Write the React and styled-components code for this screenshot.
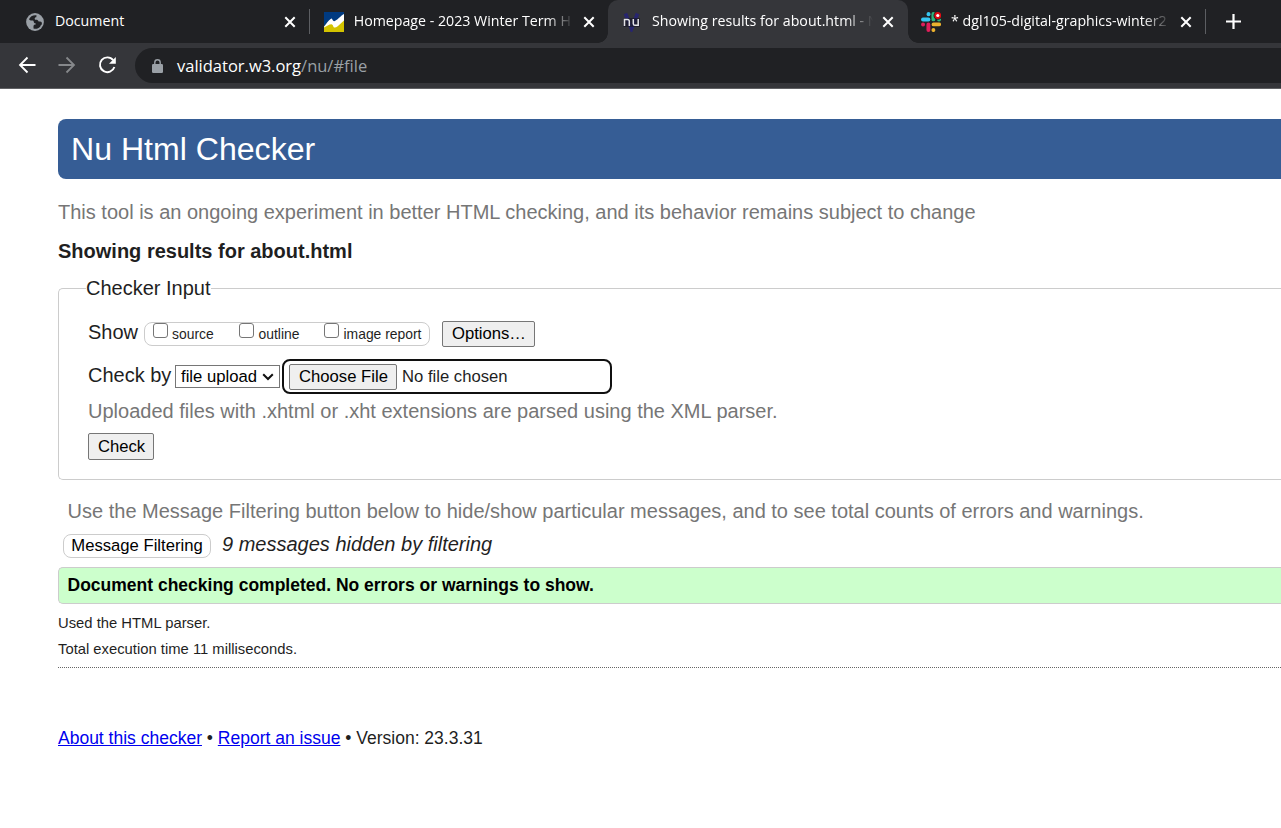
import React from "react";
import styled, { createGlobalStyle, css } from "styled-components";

const GlobalStyle = createGlobalStyle`
  *, *::before, *::after { box-sizing: border-box; }
  html, body { margin: 0; background: #fff; }
  body {
    font-family: "Liberation Sans", Arial, sans-serif;
    color: #1f1f1f;
    overflow: hidden;
  }
`;

const Window = styled.div`
  display: flex;
  flex-direction: column;
  width: 100%;
  height: 828px;
  overflow: hidden;
`;

const TabStrip = styled.div`
  display: flex;
  height: 43px;
  background: #202124;
  font-family: "Open Sans", "Noto Sans", sans-serif;
`;

const TabItem = styled.div`
  position: relative;
  display: flex;
  align-items: center;
  flex: none;
  width: ${(p) => p.$width}px;
  height: 43px;
  padding-left: ${(p) => p.$inset}px;
  padding-right: ${(p) => p.$end}px;
  color: #fff;
  ${(p) =>
    p.$active &&
    css`
      background: #35363a;
      border-radius: 10px 10px 0 0;
      &::before,
      &::after {
        content: "";
        position: absolute;
        bottom: 0;
        width: 10px;
        height: 10px;
      }
      &::before {
        left: -10px;
        background: radial-gradient(circle at 0 0, transparent 9.5px, #35363a 10px);
      }
      &::after {
        right: -10px;
        background: radial-gradient(circle at 100% 0, transparent 9.5px, #35363a 10px);
      }
    `}
`;

const TabTitle = styled.span`
  flex: 1;
  min-width: 0;
  margin: 0 9px 2px ${(p) => p.$gap}px;
  height: 24px;
  line-height: 24px;
  font-size: 14.2px;
  white-space: nowrap;
  overflow: hidden;
  -webkit-mask-image: ${(p) =>
    p.$fade ? "linear-gradient(to right, #000 calc(100% - 28px), transparent)" : "none"};
`;

const TabIcon = styled.svg`
  display: block;
  flex: none;
`;

const Divider = styled.i`
  flex: none;
  width: 1px;
  height: 25px;
  margin-top: 9px;
  background: #5c5e62;
`;

const NewTab = styled.div`
  display: flex;
  align-items: center;
  padding-left: 20px;
`;

const Toolbar = styled.div`
  display: flex;
  align-items: center;
  flex: none;
  height: 46px;
  padding: 0 0 2px 18px;
  background: #35363a;
  border-bottom: 1px solid #606164;
`;

const NavIcon = styled.svg`
  display: block;
  flex: none;
  margin-right: ${(p) => p.$after}px;
`;

const Omnibox = styled.div`
  display: flex;
  align-items: center;
  flex: 1;
  height: 35px;
  margin-top: 2px;
  padding-left: 17px;
  background: #202124;
  border-radius: 18px 0 0 18px;
  font-family: "Open Sans", "Noto Sans", sans-serif;
  font-size: 16.5px;
  line-height: 35px;
  color: #fff;
`;

const Url = styled.span`
  margin-left: 14px;
`;

const UrlPath = styled.span`
  color: #9aa0a6;
`;

const Page = styled.main`
  display: flex;
  flex-direction: column;
  padding: 30px 0 0 58px;
`;

const Banner = styled.h1`
  margin: 0;
  height: 60px;
  padding-left: 13px;
  border-radius: 8px 0 0 8px;
  background: #365d95;
  color: #fff;
  font-size: 32.1px;
  font-weight: 400;
  line-height: 60px;
`;

const Note = styled.p`
  margin: ${(p) => p.$margin};
  height: 24px;
  font-size: 20px;
  line-height: 24px;
  color: #767676;
  white-space: nowrap;
`;

const ResultsHeading = styled.h2`
  margin: 15px 0 0;
  font-size: 20px;
  line-height: 24px;
  font-weight: 700;
`;

const InputSet = styled.fieldset`
  margin: 13px 0 0;
  padding: 20px 0 19px 29px;
  height: 204px;
  min-width: 0;
  border: 1px solid #ccc;
  border-right: 0;
  border-radius: 5px 0 0 5px;
`;

const Legend = styled.legend`
  margin-left: -2px;
  padding: 0;
  height: 24px;
  font-size: 20px;
  line-height: 24px;
`;

const FormRow = styled.div`
  display: flex;
  align-items: ${(p) => p.$align || "center"};
  height: ${(p) => p.$height}px;
  margin-bottom: ${(p) => p.$after}px;
`;

const FieldName = styled.span`
  flex: none;
  width: ${(p) => p.$width}px;
  height: 24px;
  margin-bottom: 3px;
  font-size: 20px;
  line-height: 24px;
  white-space: nowrap;
`;

const CheckGroup = styled.div`
  display: flex;
  width: 286px;
  height: 24px;
  margin: 2px 12px 0 0;
  padding-left: 7.5px;
  border: 1px solid #ccc;
  border-radius: 8px;
`;

const CheckLabel = styled.label`
  display: flex;
  flex: none;
  width: ${(p) => p.$width}px;
  font-size: 13.9px;
  line-height: 22px;
  white-space: nowrap;
`;

const CheckBox = styled.input`
  appearance: none;
  flex: none;
  width: 15px;
  height: 15px;
  margin: 0 4.5px 0 0;
  border: 1px solid #767676;
  border-radius: 3px;
  background: #fff;
`;

const PlainButton = styled.button`
  display: block;
  flex: none;
  width: ${(p) => p.$width}px;
  height: ${(p) => p.$height}px;
  margin: ${(p) => p.$margin || 0};
  padding: 0 0 0 1px;
  border: 1px solid #767676;
  border-radius: 2px;
  background: #efefef;
  color: #000;
  font: 16.667px/${(p) => p.$height - 2}px "Liberation Sans", Arial, sans-serif;
  text-align: center;
  white-space: nowrap;
`;

const SelectBox = styled.div`
  display: flex;
  align-items: center;
  width: 105px;
  height: 23px;
  padding: 0 5px;
  justify-content: space-between;
  border: 1px solid #767676;
  background: #fff;
  color: #000;
  font-size: 16.667px;
  line-height: 21px;
  white-space: nowrap;
`;

const FileField = styled.div`
  display: flex;
  align-items: center;
  width: 330px;
  height: 35px;
  margin-left: 2px;
  padding-left: 5px;
  border: 2px solid #101010;
  border-radius: 8px;
  font-size: 16.667px;
  color: #1f1f1f;
`;

const FileName = styled.span`
  margin-left: 5px;
`;

const FilterRow = styled.div`
  display: flex;
  height: 24px;
  margin: 11px 0 0 5px;
`;

const FilterButton = styled.button`
  width: 148px;
  height: 24px;
  padding: 0;
  border: 1px solid #ccc;
  border-radius: 8px;
  background: #fff;
  color: #000;
  font: 16.667px/22px "Liberation Sans", Arial, sans-serif;
  white-space: nowrap;
`;

const FilterCount = styled.em`
  margin: -2px 0 0 11px;
  font-size: 20px;
  line-height: 24px;
`;

const Success = styled.p`
  margin: 9px 0 0;
  height: 37px;
  padding-left: 8.5px;
  border: 1px solid #ccc;
  border-right: 0;
  border-radius: 5px 0 0 5px;
  background: #cfc;
  color: #000;
  font-size: 17.5px;
  font-weight: 700;
  line-height: 35px;
`;

const Details = styled.div`
  height: 64px;
  padding-top: 6px;
  border-bottom: 1px dotted #666;
  font-size: 14.8px;
  line-height: 26px;
`;

const Footer = styled.footer`
  margin-top: 58px;
  font-size: 17.5px;
  line-height: 24px;
`;

const FooterLink = styled.a`
  color: #0000ee;
  text-decoration: underline;
`;

const CloseMark = () => (
  <TabIcon width="12" height="12" viewBox="0 0 12 12">
    <path d="M1.3 1.3l9.4 9.4M10.7 1.3l-9.4 9.4" stroke="#fff" strokeWidth="2" />
  </TabIcon>
);

const Globe = () => (
  <TabIcon width="18" height="18" viewBox="0 0 18 18">
    <circle cx="9" cy="9" r="8.9" fill="#9aa0a6" />
    <path
      d="M10.500 2.200C6.800 1.800 4.200 3.500 3 6.200c.6 1 1.800 1.400 3.200 1.300 1 0 1.500.5 1.600 1.400.1.900.7 1.300 1.700 1.300l.3 1.300c-1.500 0-2.300.6-2.300 1.800v2.300c2.700.7 5.200-.2 6.800-2.200.2-.9.900-1.200 1.400-1.800.4-.8.300-1.700-.2-2.500-.8-.5-1.900-.4-2.900-.5-.3-1.300-1.200-1.900-2.500-1.900-1.100 0-1.500-.5-1.400-1.300.1-.9.800-1.100 1.600-1.200z"
      fill="#202124"
    />
  </TabIcon>
);

const HomepageIcon = () => (
  <TabIcon width="20" height="20" viewBox="0 0 20 20">
    <path d="M0 0h20v20H0z" fill="#003a80" />
    <path d="M0 14.500L6.500 7.800l3.300 2.900L20 3v17H0z" fill="#d3c300" />
    <path
      d="M0 14.700C2.500 12.300 4 8.500 7.300 6.600c1-.5 1.500 3 2.900 2.700C13 8.500 16.500 4 20 2v6.500c-3 2.300-5.500 6.300-9.200 7.100-1.600.3-1.600-3-2.900-3.200C5.300 12.100 2.800 14.500 0 15.600z"
      fill="#fff"
    />
  </TabIcon>
);

const NuIcon = () => (
  <TabIcon width="20" height="20" viewBox="0 0 20 20">
    <path d="M3.500 1.500L9.500 17l6-15.500" fill="none" stroke="#27256f" strokeWidth="3.600" />
    <path d="M1.500 6h16.500v9H1.500z" fill="#19192b" opacity=".75" />
    <path
      d="M2.500 14V7.500h3Q7.300 7.500 7.300 9.300V14M11.300 7v4.700q0 1.600 1.700 1.600h3.200V7"
      fill="none"
      stroke="#e4e4e8"
      strokeWidth="1.500"
    />
  </TabIcon>
);

const SlackIcon = () => (
  <TabIcon width="20" height="20" viewBox="0 0 20 20">
    <g strokeWidth="3.900" strokeLinecap="round">
      <path d="M2 7.500h5.400" stroke="#36c5f0" />
      <path d="M7.500 2v.2" stroke="#36c5f0" />
      <path d="M12.400 2v5.400M18 7.500h.1" stroke="#2eb67d" />
      <path d="M12.500 12.400h5.600M12.400 18v.1" stroke="#ecb22e" />
      <path d="M7.400 12.500V18M2 12.500h.1" stroke="#e01e5a" />
    </g>
    <circle cx="16.800" cy="3.500" r="4.300" fill="#202124" />
    <circle cx="16.800" cy="3.500" r="3.400" fill="#e00b12" />
    <circle cx="16.800" cy="3.500" r="1.600" fill="#fff" />
  </TabIcon>
);

const checks = [
  { label: "source", width: 86.5 },
  { label: "outline", width: 85 },
  { label: "image report", width: 98 },
];

export default function App() {
  return (
    <Window>
      <GlobalStyle />
      <TabStrip>
        <TabItem $width={309} $inset={26} $end={13}>
          <Globe />
          <TabTitle $gap={11}>Document</TabTitle>
          <CloseMark />
        </TabItem>
        <Divider />
        <TabItem $width={298} $inset={14} $end={13}>
          <HomepageIcon />
          <TabTitle $gap={9.7} $fade>Homepage - 2023 Winter Term H</TabTitle>
          <CloseMark />
        </TabItem>
        <TabItem $width={300} $inset={14} $end={14.5} $active>
          <NuIcon />
          <TabTitle $gap={10} $fade>Showing results for about.html - N</TabTitle>
          <CloseMark />
        </TabItem>
        <TabItem $width={297} $inset={13} $end={13}>
          <SlackIcon />
          <TabTitle $gap={10} $fade>* dgl105-digital-graphics-winter2</TabTitle>
          <CloseMark />
        </TabItem>
        <Divider />
        <NewTab>
          <TabIcon width="15" height="15" viewBox="0 0 15 15">
            <path d="M7.500 0v15M0 7.500h15" stroke="#fff" strokeWidth="2.200" />
          </TabIcon>
        </NewTab>
      </TabStrip>

      <Toolbar>
        <NavIcon $after={22} width="18" height="18" viewBox="0 0 18 18" fill="none" stroke="#fff" strokeWidth="1.8">
          <path d="M17.500 9H2.500M9.500 1.500L2 9l7.500 7.500" />
        </NavIcon>
        <NavIcon $after={22} width="18" height="18" viewBox="0 0 18 18" fill="none" stroke="#86888b" strokeWidth="1.8">
          <path d="M.5 9h15M8.500 1.500L16 9l-7.500 7.500" />
        </NavIcon>
        <NavIcon $after={19} width="18" height="18" viewBox="0 0 18 18">
          <path d="M15.200 4.200A7.400 7.400 0 1 0 16.400 11" fill="none" stroke="#fff" strokeWidth="1.9" />
          <path d="M17.800 1v6.800H11z" fill="#fff" />
        </NavIcon>
        <Omnibox>
          <TabIcon width="11" height="14" viewBox="0 0 11 14">
            <path d="M2.800 6V3.500a2.700 2.700 0 0 1 5.400 0V6" fill="none" stroke="#9aa0a6" strokeWidth="1.400" />
            <rect y="5" width="11" height="9" rx="1.200" fill="#9aa0a6" />
          </TabIcon>
          <Url>
            validator.w3.org<UrlPath>/nu/#file</UrlPath>
          </Url>
        </Omnibox>
      </Toolbar>

      <Page>
        <Banner>Nu Html Checker</Banner>
        <Note $margin="21px 0 0">
          This tool is an ongoing experiment in better HTML checking, and its behavior remains subject to change
        </Note>
        <ResultsHeading>Showing results for about.html</ResultsHeading>

        <InputSet>
          <Legend>Checker Input</Legend>
          <FormRow $height={28} $after={11} $align="flex-start">
            <FieldName $width={56}>Show</FieldName>
            <CheckGroup>
              {checks.map((c) => (
                <CheckLabel key={c.label} $width={c.width}>
                  <CheckBox type="checkbox" />
                  <span>{c.label}</span>
                </CheckLabel>
              ))}
            </CheckGroup>
            <PlainButton $width={93} $height={26} $margin="1px 0 0">Options…</PlainButton>
          </FormRow>
          <FormRow $height={35} $after={5}>
            <FieldName $width={87}>Check by</FieldName>
            <SelectBox>
              file upload
              <TabIcon width="12" height="8" viewBox="0 0 12 8">
                <path d="M1.200 1.200L6 6l4.800-4.800" fill="none" stroke="#111" strokeWidth="2" />
              </TabIcon>
            </SelectBox>
            <FileField>
              <PlainButton $width={108} $height={26}>Choose File</PlainButton>
              <FileName>No file chosen</FileName>
            </FileField>
          </FormRow>
          <Note $margin="0">Uploaded files with .xhtml or .xht extensions are parsed using the XML parser.</Note>
          <PlainButton $width={66} $height={27} $margin="10px 0 0">Check</PlainButton>
        </InputSet>

        <Note $margin="19px 0 0 9.6px">
          Use the Message Filtering button below to hide/show particular messages, and to see total counts of errors and
          warnings.
        </Note>
        <FilterRow>
          <FilterButton>Message Filtering</FilterButton>
          <FilterCount>9 messages hidden by filtering</FilterCount>
        </FilterRow>
        <Success>Document checking completed. No errors or warnings to show.</Success>
        <Details>
          <div>Used the HTML parser.</div>
          <div>Total execution time 11 milliseconds.</div>
        </Details>
        <Footer>
          <FooterLink>About this checker</FooterLink> • <FooterLink>Report an issue</FooterLink> • Version: 23.3.31
        </Footer>
      </Page>
    </Window>
  );
}
